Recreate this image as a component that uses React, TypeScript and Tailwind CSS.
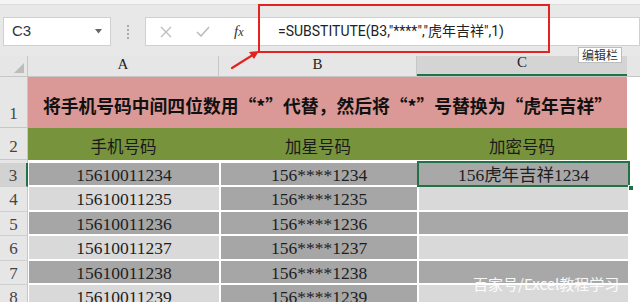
import React from "react";

const serif = "font-['Liberation_Serif','Noto_Sans_CJK_SC',serif]";
const cjk = "font-['Noto_Sans_CJK_SC',sans-serif]";

type RowData = { n: number; a: string; b: string; c: string; aDark: boolean; cDark: boolean; sel?: boolean; tall: boolean };

const rows: RowData[] = [
  { n: 3, a: "15610011234", b: "156****1234", c: "156虎年吉祥1234", aDark: true, cDark: true, sel: true, tall: false },
  { n: 4, a: "15610011235", b: "156****1235", c: "", aDark: false, cDark: false, tall: true },
  { n: 5, a: "15610011236", b: "156****1236", c: "", aDark: true, cDark: true, tall: false },
  { n: 6, a: "15610011237", b: "156****1237", c: "", aDark: false, cDark: false, tall: true },
  { n: 7, a: "15610011238", b: "156****1238", c: "", aDark: true, cDark: true, tall: false },
  { n: 8, a: "15610011239", b: "156****1239", c: "", aDark: false, cDark: false, tall: true },
];

function DataRow({ r }: { r: RowData }) {
  const h = r.tall ? "h-[25px]" : "h-[24px]";
  const ch = r.tall ? "h-[23px]" : "h-[22px]";
  return (
    <div className={`flex ${h} bg-white`}>
      <div
        className={`w-[28px] shrink-0 flex items-center justify-center pt-[2px] border-b border-[#cfcfcf] text-[17px] text-[#444] ${serif} ${
          r.sel ? "bg-[#d2d2d2] border-r-2 border-r-[#217346]" : "bg-[#e6e6e6] border-r border-r-[#c6c6c6]"
        }`}
      >
        {r.n}
      </div>
      <div className="flex gap-[2px] pl-[1px]">
        <div
          className={`w-[190px] ${ch} flex items-center justify-center pt-[2px] text-[17.5px] text-[#1e1e1e] ${serif} ${
            r.aDark ? "bg-[#a6a6a6]" : "bg-[#d9d9d9]"
          }`}
        >
          {r.a}
        </div>
        <div className={`w-[196px] ${ch} flex items-center justify-center pt-[2px] text-[17.5px] text-[#1e1e1e] bg-[#a6a6a6] ${serif}`}>
          {r.b}
        </div>
        <div
          className={`relative w-[209px] ${ch} flex items-center justify-center pt-[2px] text-[17.5px] text-[#1e1e1e] ${serif} ${
            r.cDark ? "bg-[#a8a8a8]" : "bg-[#d9d9d9]"
          }`}
        >
          {r.c}
          {r.sel && (
            <>
              <div className="absolute left-[-2px] top-[-2px] w-[213px] h-[26px] border-2 border-[#217346]" />
              <div className="absolute right-[-6px] bottom-[-6px] w-[6px] h-[6px] bg-[#217346] border border-white" />
            </>
          )}
        </div>
      </div>
    </div>
  );
}

export default function App() {
  return (
    <div className="relative w-[640px] h-[302px] overflow-hidden bg-[#e8e8e8] font-['Liberation_Sans',sans-serif]">
      {/* top strip */}
      <div className="h-[5px] bg-[#f4f4f4] border-b border-[#dcdcdc]" />
      {/* toolbar */}
      <div className="h-[51px] bg-[#e8e8e8] flex items-start pt-[12px] pl-[3px]">
        <div className="w-[108px] h-[29px] bg-white border border-[#d0d0d0] flex items-center justify-between pl-[8px] pr-[8px]">
          <span className="text-[15px] text-[#333]">C3</span>
          <svg width="7" height="5" viewBox="0 0 7 5">
            <path d="M0 0 L7 0 L3.5 4.5 Z" fill="#666" />
          </svg>
        </div>
        <div className="w-[34px] h-[29px] flex flex-col items-center justify-center gap-[2px]">
          <div className="w-[2px] h-[2px] bg-[#aaa]" />
          <div className="w-[2px] h-[2px] bg-[#aaa]" />
          <div className="w-[2px] h-[2px] bg-[#aaa]" />
          <div className="w-[2px] h-[2px] bg-[#aaa]" />
        </div>
        <div className="w-[114px] h-[29px] bg-white border border-[#d0d0d0] flex items-center">
          <svg className="ml-[14px]" width="12" height="12" viewBox="0 0 12 12">
            <path d="M1 1 L11 11 M11 1 L1 11" stroke="#bdbdbd" strokeWidth="1.4" />
          </svg>
          <svg className="ml-[24px]" width="14" height="11" viewBox="0 0 14 11">
            <path d="M1 6 L5 10 L13 1" stroke="#bdbdbd" strokeWidth="1.6" fill="none" />
          </svg>
          <span className="ml-[24px] text-[15px] italic text-[#333] font-['Liberation_Serif',serif]">
            f<span className="text-[12px]">x</span>
          </span>
        </div>
        <div className="flex-1 h-[29px] bg-white border border-[#d0d0d0] flex items-center pl-[18px] text-[14px] text-[#222] font-['Roboto','Noto_Sans_CJK_SC',sans-serif]">
          =SUBSTITUTE(B3,"****","虎年吉祥",1)
        </div>
      </div>
      {/* column headers */}
      <div className="flex h-[21px] bg-[#e6e6e6] border-b border-[#c6c6c6]">
        <div className="w-[28px] shrink-0 relative border-r border-[#c6c6c6]">
          <svg className="absolute right-[3px] bottom-[3px]" width="10" height="10" viewBox="0 0 10 10">
            <path d="M10 0 L10 10 L0 10 Z" fill="#bcbcbc" />
          </svg>
        </div>
        <div className={`w-[191px] flex items-end justify-center pb-[1px] border-r border-[#c6c6c6] text-[15px] text-[#222] ${serif}`}>A</div>
        <div className={`w-[198px] flex items-end justify-center pb-[1px] border-r border-[#c6c6c6] text-[15px] text-[#222] ${serif}`}>B</div>
        <div className={`w-[210px] flex items-end justify-center pb-[1px] bg-[#d4d4d4] border-b-2 border-[#217346] text-[15px] text-[#222] ${serif}`}>C</div>
        <div className="flex-1" />
      </div>
      {/* row 1 */}
      <div className="flex h-[51px] bg-white">
        <div className={`w-[28px] shrink-0 flex items-end justify-center pb-[1px] bg-[#e6e6e6] border-r border-b border-[#c6c6c6] text-[17px] text-[#444] ${serif}`}>1</div>
        <div className={`w-[599px] bg-[#da9896] flex items-center justify-center pt-[5px] text-[17.8px] font-bold text-[#111] ${cjk}`}>
          将手机号码中间四位数用“*”代替，然后将“*”号替换为“虎年吉祥”
        </div>
      </div>
      {/* row 2 */}
      <div className="flex h-[32px] bg-white">
        <div className={`w-[28px] shrink-0 flex items-end justify-center bg-[#e6e6e6] border-r border-b border-[#c6c6c6] text-[17px] text-[#444] ${serif}`}>2</div>
        <div className={`w-[599px] bg-[#77933c] flex items-end pb-[1px] text-[16.5px] text-[#1a1a1a] ${cjk}`}>
          <div className="w-[191px] text-center">手机号码</div>
          <div className="w-[198px] text-center">加星号码</div>
          <div className="w-[210px] text-center">加密号码</div>
        </div>
      </div>
      {/* spacer */}
      <div className="flex h-[3px] bg-white">
        <div className="w-[28px] bg-[#e6e6e6] border-r border-[#c6c6c6]" />
      </div>
      {rows.map((r) => (
        <DataRow key={r.n} r={r} />
      ))}

      {/* red highlight */}
      <div className="absolute left-[258px] top-[4px] w-[292px] h-[49px] border-2 border-[#e2231f]" />
      <svg className="absolute left-[228px] top-[46px]" width="36" height="26" viewBox="0 0 36 26">
        <path d="M4 22 L28 7" stroke="#e2231f" strokeWidth="2.2" strokeLinecap="round" />
        <path d="M31 5 L21 6 L26 13 Z" fill="#e2231f" />
      </svg>
      {/* tooltip */}
      <div className={`absolute left-[578px] top-[47px] px-[3px] h-[16px] flex items-center bg-white border border-[#bdbdbd] text-[12px] text-[#333] ${cjk}`}>
        编辑栏
      </div>
      {/* watermark */}
      <div className={`absolute left-[473px] top-[273px] whitespace-nowrap text-[15px] text-white/90 ${cjk}`}>
        百家号/Excel教程学习
      </div>
    </div>
  );
}
